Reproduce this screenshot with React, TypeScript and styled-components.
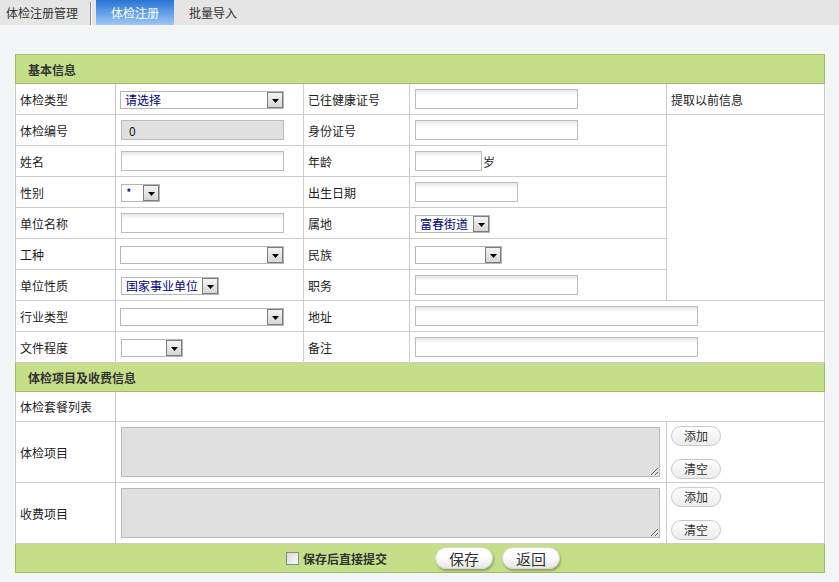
import React from "react";
import styled, { createGlobalStyle } from "styled-components";

const GlobalStyle = createGlobalStyle`
    body {
        margin: 0;
        background: #f4f5f7;
        font-family: "Noto Sans CJK SC", "Liberation Sans", sans-serif;
        font-size: 12px;
        color: #222;
    }
`;

const TABS = ["体检注册", "批量导入"];

const App = () => {
    return (
        <>
            <GlobalStyle />
            <TabBar>
                <TabTitle>体检注册管理</TabTitle>
                <Separator />
                {TABS.map((tab, index) => (
                    <Tab key={tab} $active={index === 0}>
                        {tab}
                    </Tab>
                ))}
            </TabBar>

            <Page>
                <FormTable>
                    <colgroup>
                        <col style={{ width: 100 }} />
                        <col style={{ width: 188 }} />
                        <col style={{ width: 106 }} />
                        <col style={{ width: 257 }} />
                        <col style={{ width: 158 }} />
                    </colgroup>
                    <tbody>
                        <tr>
                            <SectionCell colSpan={5}>基本信息</SectionCell>
                        </tr>
                        <Row>
                            <LabelCell>体检类型</LabelCell>
                            <FieldCell $pad={4}>
                                <Select $width={164} value="请选择" />
                            </FieldCell>
                            <LabelCell>已往健康证号</LabelCell>
                            <FieldCell>
                                <TextInput $width={163} />
                            </FieldCell>
                            <LabelCell>提取以前信息</LabelCell>
                        </Row>
                        <Row>
                            <LabelCell>体检编号</LabelCell>
                            <FieldCell>
                                <TextInput $width={163} $readonly defaultValue="0" />
                            </FieldCell>
                            <LabelCell>身份证号</LabelCell>
                            <FieldCell>
                                <TextInput $width={163} />
                            </FieldCell>
                            <FieldCell rowSpan={6} />
                        </Row>
                        <Row>
                            <LabelCell>姓名</LabelCell>
                            <FieldCell>
                                <TextInput $width={163} />
                            </FieldCell>
                            <LabelCell>年龄</LabelCell>
                            <FieldCell>
                                <TextInput $width={67} />
                                <Unit>岁</Unit>
                            </FieldCell>
                        </Row>
                        <Row>
                            <LabelCell>性别</LabelCell>
                            <FieldCell>
                                <Select $width={39} value="*" />
                            </FieldCell>
                            <LabelCell>出生日期</LabelCell>
                            <FieldCell>
                                <TextInput $width={103} />
                            </FieldCell>
                        </Row>
                        <Row>
                            <LabelCell>单位名称</LabelCell>
                            <FieldCell>
                                <TextInput $width={163} />
                            </FieldCell>
                            <LabelCell>属地</LabelCell>
                            <FieldCell>
                                <Select $width={75} value="富春街道" />
                            </FieldCell>
                        </Row>
                        <Row>
                            <LabelCell>工种</LabelCell>
                            <FieldCell $pad={4}>
                                <Select $width={164} value="" />
                            </FieldCell>
                            <LabelCell>民族</LabelCell>
                            <FieldCell>
                                <Select $width={87} value="" />
                            </FieldCell>
                        </Row>
                        <Row>
                            <LabelCell>单位性质</LabelCell>
                            <FieldCell>
                                <Select $width={98} value="国家事业单位" />
                            </FieldCell>
                            <LabelCell>职务</LabelCell>
                            <FieldCell>
                                <TextInput $width={163} />
                            </FieldCell>
                        </Row>
                        <Row>
                            <LabelCell>行业类型</LabelCell>
                            <FieldCell $pad={4}>
                                <Select $width={164} value="" />
                            </FieldCell>
                            <LabelCell>地址</LabelCell>
                            <FieldCell colSpan={2}>
                                <TextInput $width={283} />
                            </FieldCell>
                        </Row>
                        <Row>
                            <LabelCell>文件程度</LabelCell>
                            <FieldCell>
                                <Select $width={62} value="" />
                            </FieldCell>
                            <LabelCell>备注</LabelCell>
                            <FieldCell colSpan={2}>
                                <TextInput $width={283} />
                            </FieldCell>
                        </Row>

                        <tr>
                            <SectionCell colSpan={5}>体检项目及收费信息</SectionCell>
                        </tr>
                        <Row $height={30}>
                            <LabelCell>体检套餐列表</LabelCell>
                            <FieldCell colSpan={4} />
                        </Row>
                        {["体检项目", "收费项目"].map((label) => (
                            <Row key={label} $height={61}>
                                <LabelCell>{label}</LabelCell>
                                <FieldCell colSpan={3}>
                                    <ItemArea readOnly />
                                </FieldCell>
                                <FieldCell $pad={4}>
                                    <ButtonStack>
                                        <SmallButton>添加</SmallButton>
                                        <SmallButton>清空</SmallButton>
                                    </ButtonStack>
                                </FieldCell>
                            </Row>
                        ))}
                        <tr>
                            <FooterCell colSpan={5}>
                                <FooterBar>
                                    <CheckLabel>
                                        <CheckBox />
                                        保存后直接提交
                                    </CheckLabel>
                                    <FooterButtons>
                                        <BigButton>保存</BigButton>
                                        <BigButton>返回</BigButton>
                                    </FooterButtons>
                                </FooterBar>
                            </FooterCell>
                        </tr>
                    </tbody>
                </FormTable>
            </Page>
        </>
    );
};

const Select = ({ $width, value }: { $width: number; value: string }) => (
    <SelectBox $width={$width}>
        <SelectText>{value}</SelectText>
        <SelectArrow>
            <svg width="7" height="4" viewBox="0 0 7 4">
                <path d="M0 0h7L3.5 4z" fill="#000" />
            </svg>
        </SelectArrow>
    </SelectBox>
);

export default App;

const TabBar = styled.div`
    display: flex;
    align-items: stretch;
    height: 25px;
    background: #e5e5e5;
`;

const TabTitle = styled.div`
    display: flex;
    align-items: center;
    padding: 0 0 1px 6px;
    color: #333;
`;

const Separator = styled.div`
    width: 1px;
    margin: 2px 4px 0 12px;
    background: #8f8f8f;
    border-right: 1px solid #fafafa;
`;

const Tab = styled.div<{ $active?: boolean }>`
    display: flex;
    align-items: center;
    justify-content: center;
    width: 78px;
    padding-bottom: 1px;
    color: ${({ $active }) => ($active ? "#fff" : "#333")};
    background: ${({ $active }) =>
        $active ? "linear-gradient(#2674d3, #9ec7f5)" : "transparent"};
`;

const Page = styled.div`
    padding: 29px 0 8px 15px;
`;

const FormTable = styled.table`
    width: 809px;
    table-layout: fixed;
    border-collapse: collapse;
    background: #fff;
`;

const Row = styled.tr<{ $height?: number }>`
    height: ${({ $height }) => $height ?? 31}px;
`;

const SectionCell = styled.td`
    height: 28px;
    padding: 0 0 0 12px;
    background: #c5df88;
    border: 1px solid #a0bc6c;
    font-weight: bold;
    color: #333;
`;

const LabelCell = styled.td`
    padding: 0 0 0 4px;
    border: 1px solid #cccccc;
    color: #1e1e1e;
    vertical-align: middle;
`;

const FieldCell = styled.td<{ $pad?: number }>`
    padding: 0 0 0 ${({ $pad }) => $pad ?? 5}px;
    border: 1px solid #cccccc;
    vertical-align: middle;
    white-space: nowrap;
`;

const TextInput = styled.input<{ $width: number; $readonly?: boolean }>`
    box-sizing: border-box;
    width: ${({ $width }) => $width}px;
    height: 20px;
    margin: 0;
    padding: 0 0 0 7px;
    border: 1px solid #c0bdb6;
    font: inherit;
    color: #111;
    vertical-align: middle;
    background: ${({ $readonly }) =>
        $readonly ? "#e0e0e0" : "linear-gradient(#dfe7ef 0, #fff 5px)"};
`;

const Unit = styled.span`
    vertical-align: middle;
    margin-left: 1px;
`;

const SelectBox = styled.div<{ $width: number }>`
    box-sizing: border-box;
    display: inline-flex;
    align-items: center;
    justify-content: space-between;
    width: ${({ $width }) => $width}px;
    height: 18px;
    border: 1px solid #b5b5b5;
    background: #fff;
    vertical-align: middle;
`;

const SelectText = styled.span`
    padding-left: 4px;
    color: #000080;
    line-height: 16px;
    overflow: hidden;
`;

const SelectArrow = styled.span`
    box-sizing: border-box;
    display: flex;
    align-items: center;
    justify-content: center;
    width: 16px;
    height: 16px;
    padding-top: 2px;
    border: 1px solid #7d7d7d;
    background: linear-gradient(#f4f4f4, #d6d6d6);
    flex-shrink: 0;
`;

const ItemArea = styled.textarea`
    box-sizing: border-box;
    display: block;
    width: 539px;
    height: 50px;
    margin: 0;
    border: 1px solid #bdb8b1;
    background: #e0e0e0;
    font: inherit;
`;

const ButtonStack = styled.div`
    display: flex;
    flex-direction: column;
    align-items: flex-start;
    gap: 13px;
`;

const SmallButton = styled.button`
    box-sizing: border-box;
    width: 50px;
    height: 20px;
    padding: 0;
    border: 1px solid #c9c9c9;
    border-radius: 10px;
    background: linear-gradient(#ffffff, #ececec);
    font: inherit;
    color: #333;
`;

const FooterCell = styled.td`
    height: 28px;
    padding: 0;
    background: #c5df88;
    border: 1px solid #a0bc6c;
`;

const FooterBar = styled.div`
    display: flex;
    align-items: center;
    justify-content: center;
    gap: 48px;
    padding-left: 6px;
`;

const CheckLabel = styled.label`
    display: flex;
    align-items: center;
    gap: 4px;
    font-weight: bold;
    color: #333;
`;

const CheckBox = styled.span`
    box-sizing: border-box;
    width: 13px;
    height: 13px;
    border: 1px solid #8a8a8a;
    background: linear-gradient(135deg, #d8d8d8, #fdfdfd);
`;

const FooterButtons = styled.div`
    display: flex;
    gap: 9px;
`;

const BigButton = styled.button`
    box-sizing: border-box;
    width: 58px;
    height: 22px;
    padding: 0;
    border: 1px solid #d6d6d6;
    border-radius: 11px;
    background: linear-gradient(#ffffff 40%, #e6e6e6);
    box-shadow: 1px 2px 2px rgba(80, 100, 40, 0.45);
    font: inherit;
    font-size: 15px;
    color: #333;
`;
